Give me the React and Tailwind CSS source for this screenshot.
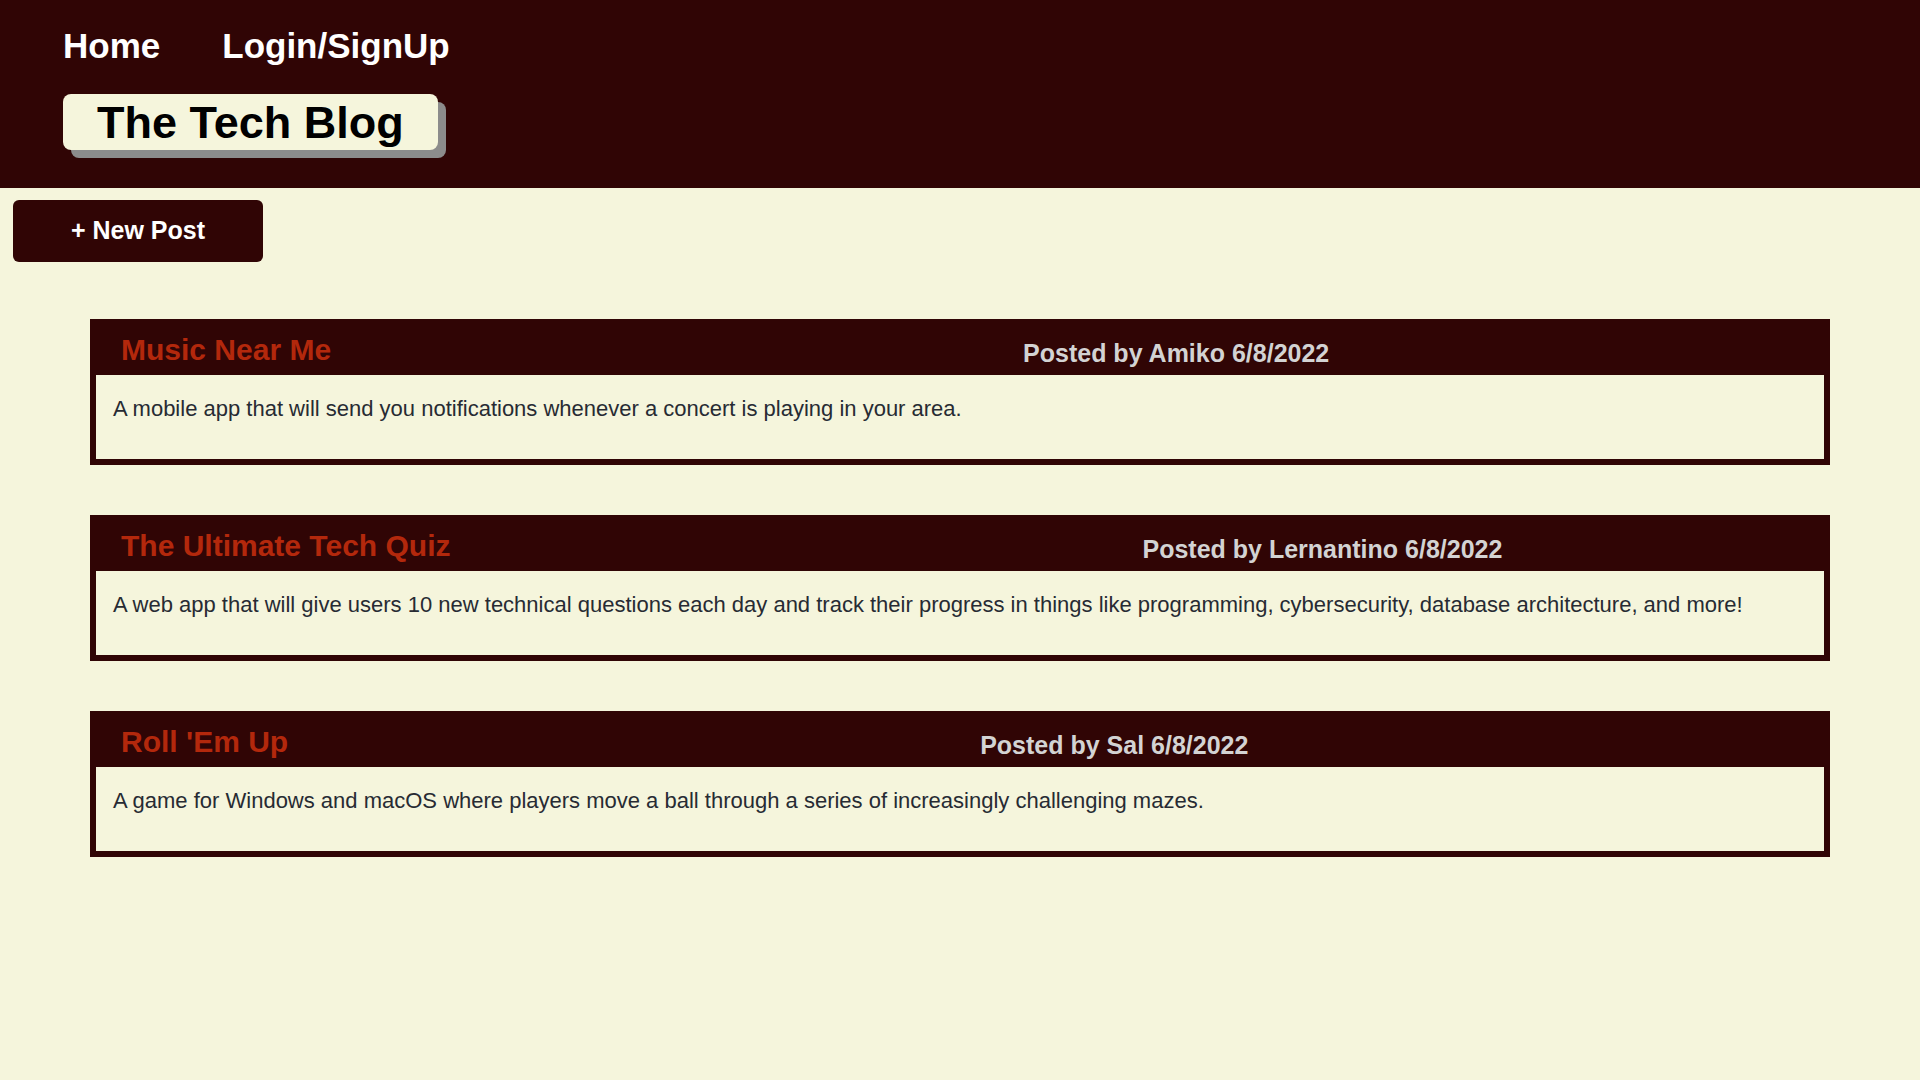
import React from "react";

const posts = [
  {
    title: "Music Near Me",
    author: "Amiko",
    date: "6/8/2022",
    body: "A mobile app that will send you notifications whenever a concert is playing in your area.",
  },
  {
    title: "The Ultimate Tech Quiz",
    author: "Lernantino",
    date: "6/8/2022",
    body: "A web app that will give users 10 new technical questions each day and track their progress in things like programming, cybersecurity, database architecture, and more!",
  },
  {
    title: "Roll 'Em Up",
    author: "Sal",
    date: "6/8/2022",
    body: "A game for Windows and macOS where players move a ball through a series of increasingly challenging mazes.",
  },
];

const PostCard = ({ post }) => (
  <article className="border-[6px] border-[#300505] bg-[#f5f5dc]">
    {/* dark title strip */}
    <div className="flex items-start h-[50px] bg-[#300505] pl-[25px] pt-[7px]">
      <h2 className="text-[30px] leading-[36px] font-bold text-[#b3280c] whitespace-nowrap">
        {post.title}
      </h2>
      <p className="ml-[692px] mt-[6px] text-[25px] leading-[30px] font-bold text-[#d3d3d3] whitespace-nowrap">
        Posted by {post.author} {post.date}
      </p>
    </div>
    <div className="px-[17px] pt-[17px] pb-[34px]">
      <p className="text-[22px] leading-[33px] text-[#272b33]">{post.body}</p>
    </div>
  </article>
);

const App = () => {
  return (
    <div
      className="min-h-screen bg-[#f5f5dc]"
      style={{ fontFamily: '"Liberation Sans", Arial, sans-serif' }}
    >
      {/* Header */}
      <header className="h-[188px] bg-[#300505] px-[63px] pt-[26px]">
        <nav className="flex gap-[62px] text-[35px] leading-[40px] font-bold text-white">
          <a href="#">Home</a>
          <a href="#">Login/SignUp</a>
        </nav>
        <div className="mt-[28px] flex">
          <h1 className="flex h-[56px] items-center rounded-lg bg-[#f5f5dc] px-[34px] text-[45px] leading-none font-bold text-black shadow-[8px_8px_0_#8c8c8c]">
            The Tech Blog
          </h1>
        </div>
      </header>

      {/* New post button */}
      <div className="pl-[13px] pt-[12px]">
        <button className="flex h-[62px] w-[250px] items-center justify-center rounded-md bg-[#300505] text-[25px] font-bold text-white">
          + New Post
        </button>
      </div>

      {/* Posts */}
      <main className="mt-[57px] ml-[90px] mr-[90px] flex flex-col gap-[50px]">
        {posts.map((post) => (
          <PostCard key={post.title} post={post} />
        ))}
      </main>
    </div>
  );
};

export default App;
